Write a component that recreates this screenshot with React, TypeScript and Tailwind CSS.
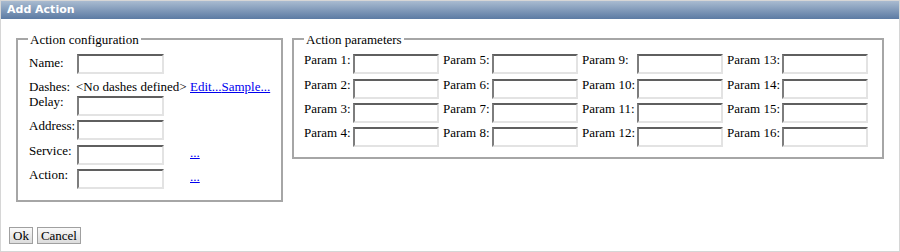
import React from "react";

const inputCls =
  "block h-[20px] border-2 border-solid border-t-[#5f5f5f] border-l-[#7d7d7d] border-b-[#e3e3e3] border-r-[#e3e3e3] bg-white outline-none";

const linkCls = "text-[#0000ee] underline";

function TextBox({ wide = false }: { wide?: boolean }) {
  return <input type="text" className={`${inputCls} ${wide ? "w-[87px]" : "w-[86px]"}`} />;
}

const configRows = ["Delay:", "Address:", "Service:", "Action:"];

export default function App() {
  return (
    <div className="w-[900px] h-[252px] overflow-hidden border border-[#d6d6d6] bg-white text-[13px] leading-[15px] text-black font-[family-name:Liberation_Serif,Times_New_Roman,serif]">
      <div className="h-[18px] bg-gradient-to-b from-[#a9bbd0] to-[#5c7ba3] pl-[6px] text-[11px] leading-[18px] font-bold text-white font-[family-name:DejaVu_Sans,Verdana,sans-serif]">
        Add Action
      </div>

      <div className="flex items-start gap-[9px] pl-[15px] pt-[12.5px]">
        {/* left: action configuration */}
        <fieldset className="w-[267px] border-2 border-solid border-[#a6a6a6] px-[10px] pt-[7.8px] pb-[11px]">
          <legend className="px-[2px]">Action configuration</legend>
          <div className="grid grid-cols-[49px_113px_auto] items-start gap-y-[4.4px]">
            <span className="pl-[1px] mt-[0.5px]">Name:</span>
            <TextBox wide />
            <span />

            <span className="pl-[1px] h-[13px] whitespace-nowrap">Dashes:</span>
            <span className="h-[13px] -ml-[1px] whitespace-nowrap">&lt;No dashes defined&gt;</span>
            <span className="h-[13px] whitespace-nowrap">
              <a href="#" className={linkCls}>Edit...</a>
              <a href="#" className={linkCls}>Sample...</a>
            </span>

            {configRows.map((label) => (
              <React.Fragment key={label}>
                <span className="pl-[1px] -mt-[2px] whitespace-nowrap">{label}</span>
                <TextBox wide />
                {label === "Service:" || label === "Action:" ? (
                  <a href="#" className={`${linkCls} w-fit`}>...</a>
                ) : (
                  <span />
                )}
              </React.Fragment>
            ))}
          </div>
        </fieldset>

        {/* right: action parameters */}
        <fieldset className="w-[592px] border-2 border-solid border-[#a6a6a6] px-[10px] pt-[7.8px] pb-[9.5px]">
          <legend className="px-[2px]">Action parameters</legend>
          <div className="grid grid-cols-[45px_86px_45px_86px_51px_86px_51px_86px] items-start gap-x-[4px] gap-y-[4.4px]">
            {[1, 2, 3, 4].map((row) =>
              [row, row + 4, row + 8, row + 12].map((n) => (
                <React.Fragment key={n}>
                  <span className="-mt-[2px] whitespace-nowrap">
                    Param {n}:
                  </span>
                  <TextBox />
                </React.Fragment>
              ))
            )}
          </div>
        </fieldset>
      </div>

      <div className="flex gap-[4px] pl-[8px] mt-[25px]">
        <button className="h-[17px] px-[3px] leading-[15px] border border-[#a0a0a0] bg-gradient-to-b from-[#fafafa] to-[#dcdcdc] text-black">
          Ok
        </button>
        <button className="h-[17px] px-[3px] leading-[15px] border border-[#a0a0a0] bg-gradient-to-b from-[#fafafa] to-[#dcdcdc] text-black">
          Cancel
        </button>
      </div>
    </div>
  );
}
